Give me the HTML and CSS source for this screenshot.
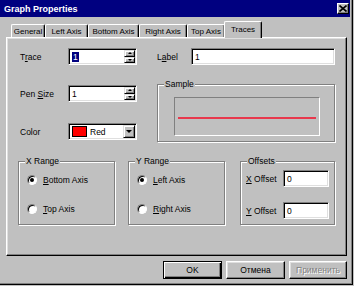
FILE: index.html
```html
<!DOCTYPE html>
<html lang="en">
<head>
    <meta charset="UTF-8">
    <title>Graph Properties</title>
    <link rel="stylesheet" href="styles.css">
</head>
<body>

<div class="window">
    <!-- Title Bar -->
    <div class="titlebar">
        <span class="title">Graph Properties</span>
        <span class="close">
            <svg width="8" height="7" viewBox="0 0 8 7"><path d="M0.5 0.5 L7.5 6.5 M7.5 0.5 L0.5 6.5" stroke="#000" stroke-width="1.6"/></svg>
        </span>
    </div>

    <!-- Tabs -->
    <div class="tabs">
        <span class="tab t-general">General</span>
        <span class="tab t-left">Left Axis</span>
        <span class="tab t-bottom">Bottom Axis</span>
        <span class="tab t-right">Right Axis</span>
        <span class="tab t-top">Top Axis</span>
        <span class="tab t-traces active">Traces</span>
    </div>

    <!-- Tab Page -->
    <div class="panel">
        <div class="upper">
            <div class="leftcol">
                <div class="row">
                    <span class="lbl">T<u>r</u>ace</span>
                    <div class="field spin">
                        <span class="val"><span class="sel">1</span></span>
                        <span class="spinbtns">
                            <span class="sbtn"><span class="up"></span></span>
                            <span class="sbtn"><span class="down"></span></span>
                        </span>
                    </div>
                </div>
                <div class="row row-pen">
                    <span class="lbl">Pen <u>S</u>ize</span>
                    <div class="field spin">
                        <span class="val">1</span>
                        <span class="spinbtns">
                            <span class="sbtn"><span class="up"></span></span>
                            <span class="sbtn"><span class="down"></span></span>
                        </span>
                    </div>
                </div>
                <div class="row row-color">
                    <span class="lbl">Color</span>
                    <div class="field combo">
                        <span class="swatch"></span>
                        <span class="val">Red</span>
                        <span class="dropbtn"><span class="down big"></span></span>
                    </div>
                </div>
            </div>

            <div class="rightcol">
                <div class="row">
                    <span class="lbl lbl-label">L<u>a</u>bel</span>
                    <div class="field wide"><span class="val">1</span></div>
                </div>
                <div class="group sample">
                    <span class="legend">Sample</span>
                    <div class="preview"><div class="line"></div></div>
                </div>
            </div>
        </div>

        <div class="groups">
            <div class="group range">
                <span class="legend">X Range</span>
                <div class="radio r1"><span class="dot on"></span><span><u>B</u>ottom Axis</span></div>
                <div class="radio r2"><span class="dot"></span><span><u>T</u>op Axis</span></div>
            </div>
            <div class="group range yrange">
                <span class="legend">Y Range</span>
                <div class="radio r1"><span class="dot on"></span><span><u>L</u>eft Axis</span></div>
                <div class="radio r2"><span class="dot"></span><span><u>R</u>ight Axis</span></div>
            </div>
            <div class="group offsets">
                <span class="legend">Offsets</span>
                <div class="orow o1">
                    <span class="olbl"><u>X</u> Offset</span>
                    <div class="field small"><span class="val">0</span></div>
                </div>
                <div class="orow o2">
                    <span class="olbl"><u>Y</u> Offset</span>
                    <div class="field small"><span class="val">0</span></div>
                </div>
            </div>
        </div>
    </div>

    <!-- Dialog Buttons -->
    <div class="buttons">
        <span class="btn default">OK</span>
        <span class="btn">Отмена</span>
        <span class="btn disabled">Применить</span>
    </div>
</div>

</body>
</html>
```

FILE: styles.css
```css
* {
    margin: 0;
    padding: 0;
    box-sizing: border-box;
}

body {
    width: 354px;
    height: 286px;
    overflow: hidden;
    background: #c0c0c0;
    font-family: "Liberation Sans", Arial, sans-serif;
    font-size: 8.5px;
    color: #000;
}

u {
    text-decoration: underline;
    text-underline-offset: 1px;
}

/* Window frame */
.window {
    width: 353px;
    height: 285px;
    padding: 0 2px 2px 0;
    border-right: 1px solid #000;
    border-bottom: 1px solid #000;
    box-shadow: inset -1px -1px #808080;
}

/* Title bar */
.titlebar {
    height: 17px;
    background: #000080;
    display: flex;
    align-items: center;
    justify-content: space-between;
    padding: 0 1px 0 4px;
}

.title {
    color: #fff;
    font-weight: bold;
    font-size: 9px;
}

.close {
    width: 12px;
    height: 11px;
    background: #c0c0c0;
    border-top: 1px solid #fff;
    border-left: 1px solid #fff;
    border-right: 1px solid #000;
    border-bottom: 1px solid #000;
    box-shadow: inset -1px -1px #808080;
    display: flex;
    align-items: center;
    justify-content: center;
}

/* Tabs */
.tabs {
    height: 20px;
    display: flex;
    align-items: flex-end;
    padding-left: 11px;
    font-size: 8px;
}

.tab {
    height: 13px;
    display: flex;
    align-items: center;
    justify-content: center;
    border-top: 1px solid #fff;
    border-left: 1px solid #fff;
    border-right: 1px solid #000;
    border-radius: 2px 2px 0 0;
    box-shadow: inset -1px 0 #808080;
    padding-top: 1px;
}

.t-general { width: 34px; }
.t-left { width: 43px; }
.t-bottom { width: 51px; }
.t-right { width: 48px; }
.t-top { width: 38px; }

.tab.active {
    width: 38px;
    height: 17px;
    margin: 0 -1px -1px -1px;
    padding-bottom: 2px;
    position: relative;
    z-index: 1;
    background: #c0c0c0;
}

/* Tab page */
.panel {
    margin-left: 6px;
    width: 341px;
    height: 219px;
    border-top: 1px solid #fff;
    border-left: 1px solid #fff;
    border-right: 1px solid #000;
    border-bottom: 1px solid #000;
    box-shadow: inset -1px -1px #808080, inset 1px 1px #dfdfdf;
    padding: 10px 0 0 11px;
}

.upper {
    display: flex;
}

.leftcol {
    margin-left: 2px;
    width: 117px;
}

.rightcol {
    margin-left: 20px;
    width: 178px;
}

.row {
    display: flex;
    align-items: center;
    height: 17px;
}

.row-pen { margin-top: 20px; }
.row-color { margin-top: 21px; }

.lbl {
    width: 48px;
}

.lbl-label {
    width: 34px;
}

/* Sunken edit fields */
.field {
    height: 17px;
    background: #fff;
    border-top: 1px solid #808080;
    border-left: 1px solid #808080;
    border-right: 1px solid #fff;
    border-bottom: 1px solid #fff;
    box-shadow: inset 1px 1px #000, inset -1px -1px #dfdfdf;
    display: flex;
    align-items: center;
}

.field .val {
    padding-left: 3px;
    flex: 1;
}

.spin, .combo { width: 69px; }
.wide { width: 144px; }
.small { width: 46px; }

.sel {
    background: #000080;
    color: #fff;
    padding: 0 1px;
}

.spinbtns {
    width: 11px;
    height: 13px;
    margin-right: 1px;
    display: flex;
    flex-direction: column;
}

.sbtn {
    flex: 1;
    background: #c0c0c0;
    border-top: 1px solid #dfdfdf;
    border-left: 1px solid #dfdfdf;
    border-right: 1px solid #000;
    border-bottom: 1px solid #000;
    box-shadow: inset 1px 1px #fff, inset -1px -1px #808080;
    display: flex;
    align-items: center;
    justify-content: center;
}

.up {
    width: 0;
    height: 0;
    border-left: 2px solid transparent;
    border-right: 2px solid transparent;
    border-bottom: 2px solid #000;
}

.down {
    width: 0;
    height: 0;
    border-left: 2px solid transparent;
    border-right: 2px solid transparent;
    border-top: 2px solid #000;
}

.down.big {
    border-left-width: 3px;
    border-right-width: 3px;
    border-top-width: 3px;
}

.swatch {
    width: 15px;
    height: 11px;
    margin-left: 3px;
    background: #ff0000;
    border: 1px solid #000;
}

.combo .val {
    padding-left: 3px;
}

.dropbtn {
    width: 12px;
    height: 13px;
    margin-right: 1px;
    background: #c0c0c0;
    border-top: 1px solid #dfdfdf;
    border-left: 1px solid #dfdfdf;
    border-right: 1px solid #000;
    border-bottom: 1px solid #000;
    box-shadow: inset 1px 1px #fff, inset -1px -1px #808080;
    display: flex;
    align-items: center;
    justify-content: center;
}

/* Group boxes */
.group {
    border: 1px solid #808080;
    box-shadow: inset 1px 1px #fff, 1px 1px #fff;
}

.legend {
    display: block;
    width: fit-content;
    margin: -6px 0 0 6px;
    padding: 0 1px;
    line-height: 11px;
    background: #c0c0c0;
}

.sample {
    margin-top: 19px;
    height: 58px;
}

.preview {
    margin: 7px 0 0 16px;
    width: 146px;
    height: 39px;
    border-top: 1px solid #808080;
    border-left: 1px solid #808080;
    border-right: 1px solid #fff;
    border-bottom: 1px solid #fff;
    padding: 19px 0 0 3px;
}

.line {
    width: 138px;
    height: 2px;
    background: #e8384c;
}

.groups {
    display: flex;
    margin-top: 19px;
}

.range {
    width: 97px;
    height: 64px;
}

.yrange { margin-left: 13px; }

.offsets {
    width: 95px;
    height: 64px;
    margin-left: 15px;
}

.radio {
    display: flex;
    align-items: center;
    gap: 6px;
    height: 14px;
    padding-left: 8px;
}

.r1 { margin-top: 6px; }
.r2 { margin-top: 15px; }

.dot {
    width: 10px;
    height: 10px;
    border-radius: 50%;
    background: #fff;
    border: 1px solid;
    border-color: #808080 #fff #fff #808080;
    box-shadow: inset 1px 1px #000;
    display: flex;
    align-items: center;
    justify-content: center;
}

.dot.on::after {
    content: "";
    width: 4px;
    height: 4px;
    border-radius: 50%;
    background: #000;
}

.orow {
    display: flex;
    align-items: center;
    padding-left: 5px;
}

.o1 { margin-top: 3px; }
.o2 { margin-top: 15px; }

.olbl {
    width: 37px;
}

/* Dialog buttons */
.buttons {
    display: flex;
    justify-content: flex-end;
    gap: 4px;
    margin-top: 5px;
    padding-right: 3px;
}

.btn {
    width: 59px;
    height: 18px;
    display: flex;
    align-items: center;
    justify-content: center;
    border-top: 1px solid #fff;
    border-left: 1px solid #fff;
    border-right: 1px solid #000;
    border-bottom: 1px solid #000;
    box-shadow: inset -1px -1px #808080, inset 1px 1px #dfdfdf;
}

.btn.default {
    border: 1px solid #000;
    box-shadow: inset 1px 1px #fff, inset -1px -1px #000, inset -2px -2px #808080;
}

.btn.disabled {
    width: 58px;
    color: #808080;
    text-shadow: 1px 1px #fff;
}
```
